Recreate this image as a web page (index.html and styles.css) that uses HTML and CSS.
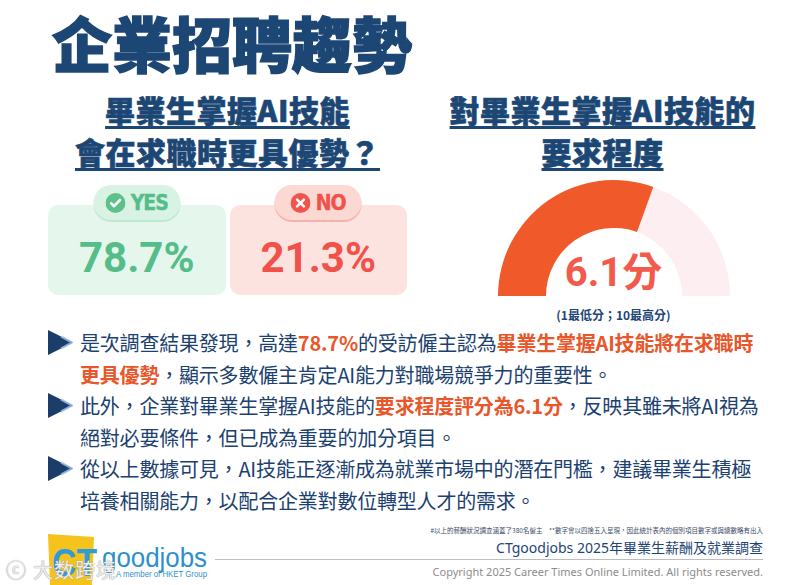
FILE: index.html
```html
<!DOCTYPE html>
<html lang="zh-Hant">
<head>
<meta charset="utf-8">
<title>企業招聘趨勢</title>
<link rel="stylesheet" href="styles.css">
</head>
<body>
<div class="page">
  <h1 class="title">企業招聘趨勢</h1>

  <section class="top">
    <div class="col">
      <h2 class="sub">畢業生掌握AI技能<br>會在求職時更具優勢？</h2>
      <div class="choices">
        <div class="choice yes">
          <div class="pill">
            <svg class="pill-icon" viewBox="0 0 20 20" width="20" height="20"><circle cx="10" cy="10" r="10" fill="#5cc18b"/><path d="M5.6 10.3 L8.6 13.2 L14.4 7" fill="none" stroke="#fff" stroke-width="2.6" stroke-linecap="round" stroke-linejoin="round"/></svg>
            <span class="pill-text">YES</span>
          </div>
          <div class="num">78.7%</div>
        </div>
        <div class="choice no">
          <div class="pill">
            <svg class="pill-icon" viewBox="0 0 20 20" width="20" height="20"><circle cx="10" cy="10" r="10" fill="#f0544a"/><path d="M6.6 6.6 L13.4 13.4 M13.4 6.6 L6.6 13.4" fill="none" stroke="#fff" stroke-width="2.6" stroke-linecap="round"/></svg>
            <span class="pill-text">NO</span>
          </div>
          <div class="num">21.3%</div>
        </div>
      </div>
    </div>

    <div class="col">
      <h2 class="sub">對畢業生掌握AI技能的<br>要求程度</h2>
      <div class="gauge">
        <svg viewBox="0 0 240 120" width="240" height="120">
          <path d="M159.3 8.9 A116 116 0 0 1 236 118 L188 118 A68 68 0 0 0 143 54 Z" fill="#fdeef1"/>
          <path d="M4 118 A116 116 0 0 1 159.3 8.9 L143 54 A68 68 0 0 0 52 118 Z" fill="#f05a2a"/>
        </svg>
        <div class="score">6.1分</div>
      </div>
      <div class="legend">(1最低分；10最高分)</div>
    </div>
  </section>

  <ul class="points">
    <li>
      <svg class="tri" viewBox="0 0 25 25" width="25" height="25"><polygon points="0,0 25,12.5 0,25" fill="#1b3d69"/><polyline points="13,6.5 24,12.5 13,18.5" fill="none" stroke="#9cc0e4" stroke-width="2" stroke-linejoin="round" opacity="0.8"/></svg>
      <p>是次調查結果發現，高達<b>78.7%</b>的受訪僱主認為<b>畢業生掌握AI技能將在求職時<br>更具優勢</b>，顯示多數僱主肯定AI能力對職場競爭力的重要性。</p>
    </li>
    <li>
      <svg class="tri" viewBox="0 0 25 25" width="25" height="25"><polygon points="0,0 25,12.5 0,25" fill="#1b3d69"/><polyline points="13,6.5 24,12.5 13,18.5" fill="none" stroke="#9cc0e4" stroke-width="2" stroke-linejoin="round" opacity="0.8"/></svg>
      <p>此外，企業對畢業生掌握AI技能的<b>要求程度評分為6.1分</b>，反映其雖未將AI視為<br>絕對必要條件，但已成為重要的加分項目。</p>
    </li>
    <li>
      <svg class="tri" viewBox="0 0 25 25" width="25" height="25"><polygon points="0,0 25,12.5 0,25" fill="#1b3d69"/><polyline points="13,6.5 24,12.5 13,18.5" fill="none" stroke="#9cc0e4" stroke-width="2" stroke-linejoin="round" opacity="0.8"/></svg>
      <p>從以上數據可見，AI技能正逐漸成為就業市場中的潛在門檻，建議畢業生積極<br>培養相關能力，以配合企業對數位轉型人才的需求。</p>
    </li>
  </ul>

  <footer class="foot">
    <svg class="logo" viewBox="0 0 170 55" width="170" height="55">
      <polygon points="8,4 54,7 52,55 10,55" fill="#f6c31c"/>
      <text x="12" y="46" class="logo-ct" textLength="45" lengthAdjust="spacingAndGlyphs">CT</text>
      <text x="62" y="37" class="logo-gj" textLength="105" lengthAdjust="spacingAndGlyphs">goodjobs</text>
      <text x="76" y="47" class="logo-sub" textLength="91" lengthAdjust="spacingAndGlyphs">A member of HKET Group</text>
    </svg>
    <div class="foot-text">
      <div class="note">#以上的薪酬狀況調查涵蓋了380名僱主　**數字會以四捨五入呈現，因此統計表內的個別項目數字或與總數略有出入</div>
      <div class="survey">CTgoodjobs 2025年畢業生薪酬及就業調查</div>
      <div class="rule"></div>
      <div class="copy">Copyright 2025 Career Times Online Limited. All rights reserved.</div>
    </div>
  </footer>

  <div class="watermark"><span class="wm-icon">ⓒ</span>大数跨境</div>
</div>
</body>
</html>
```
FILE: styles.css
```css
* { box-sizing: border-box; }
html, body { margin: 0; padding: 0; background: #ffffff; }
body {
  font-family: "Noto Sans CJK TC", "Noto Sans", sans-serif;
  color: #1b416f;
}
.page {
  position: relative;
  width: 798px;
  height: 585px;
  overflow: hidden;
  background: #ffffff;
}
.title {
  margin: 0;
  padding: 9px 0 0 52px;
  font-size: 60px;
  line-height: 66px;
  font-weight: 900;
  color: #1c4775;
  -webkit-text-stroke: 1.5px #1c4775;
}
.top {
  display: grid;
  grid-template-columns: 359px 1fr;
  margin: 13px 0 0 48px;
}
.col {
  display: flex;
  flex-direction: column;
  align-items: center;
}
.sub {
  margin: 0;
  font-size: 30px;
  line-height: 42px;
  font-weight: 900;
  text-align: center;
  color: #1c4775;
  -webkit-text-stroke: 0.6px #1c4775;
  text-decoration: underline;
  text-decoration-thickness: 3px;
  text-underline-offset: 4px;
  letter-spacing: 0.5px;
}
.choices {
  display: flex;
  gap: 4px;
  width: 359px;
  margin-top: 13px;
}
.choice {
  position: relative;
  flex: 1;
  margin-top: 20px;
  height: 90px;
  border-radius: 10px;
  text-align: center;
}
.choice.yes { background: #e5f7ec; color: #55bd89; }
.choice.no { background: #fde3df; color: #f0524a; }
.pill {
  position: absolute;
  top: -20px;
  left: 50%;
  transform: translateX(-50%);
  width: 87px;
  height: 35px;
  border-radius: 18px;
  display: flex;
  align-items: center;
  justify-content: center;
  gap: 5px;
}
.yes .pill { background: #d8f3e3; box-shadow: 0 2px 0 #c0e8d1; }
.no .pill { background: #fcd8d3; box-shadow: 0 2px 0 #f3b4ab; }
.pill-icon { flex: none; }
.pill-text {
  font-family: "DejaVu Sans Condensed", "DejaVu Sans", sans-serif;
  font-weight: 700;
  font-size: 21px;
  line-height: 22px;
  letter-spacing: -1px;
  -webkit-text-stroke: 0.4px currentColor;
}
.num {
  padding-top: 30px;
  font-family: Roboto, "Liberation Sans", sans-serif;
  font-weight: 700;
  font-size: 42px;
  line-height: 45px;
}
.gauge {
  position: relative;
  width: 240px;
  height: 120px;
  margin: 6px 0 0 22px;
}
.gauge svg { display: block; }
.score {
  position: absolute;
  left: 0;
  right: 0;
  top: 75px;
  text-align: center;
  font-family: Roboto, "Noto Sans CJK TC", sans-serif;
  font-weight: 700;
  font-size: 40px;
  line-height: 40px;
  color: #f25a4b;
}
.legend {
  margin: 9px 0 0 22px;
  font-size: 12px;
  line-height: 16px;
  font-weight: 700;
  color: #1c4474;
}
.points {
  list-style: none;
  margin: 4px 0 0 0;
  padding: 0 0 0 48px;
}
.points li {
  display: flex;
  align-items: flex-start;
  gap: 7px;
}
.tri {
  flex: none;
  margin-top: 3px;
}
.points p {
  margin: 0;
  font-size: 20px;
  line-height: 31.5px;
  letter-spacing: -0.2px;
  white-space: nowrap;
  color: #1b416f;
}
.points b {
  font-weight: 700;
  color: #e8562a;
}
.foot {
  display: grid;
  grid-template-columns: 170px 1fr;
  column-gap: 5px;
  margin-top: 9px;
  padding: 0 35px 0 40px;
}
.logo {
  display: block;
  margin-top: 5px;
}
.logo-ct {
  font-family: "Liberation Sans", Arial, sans-serif;
  font-weight: 700;
  font-size: 38px;
  fill: #2f9bd9;
}
.logo-gj {
  font-family: "Liberation Sans", Arial, sans-serif;
  font-weight: 400;
  font-size: 27px;
  fill: #2e8fd0;
}
.logo-sub {
  font-family: "Liberation Sans", Arial, sans-serif;
  font-size: 8.5px;
  fill: #2e8fd0;
}
.foot-text {
  display: flex;
  flex-direction: column;
  align-items: flex-end;
}
.note {
  font-size: 6.5px;
  line-height: 10px;
  color: #3a4a66;
  white-space: nowrap;
}
.survey {
  margin-top: 4px;
  font-family: "Noto Sans", "Noto Sans CJK TC", sans-serif;
  font-size: 14px;
  line-height: 18px;
  color: #1c4474;
  white-space: nowrap;
}
.rule {
  align-self: stretch;
  margin-top: 2px;
  border-top: 1px solid #bdbdbd;
}
.copy {
  margin-top: 4px;
  font-family: "Noto Sans", sans-serif;
  font-size: 11px;
  line-height: 16px;
  color: #8c8c8c;
  white-space: nowrap;
}
.watermark {
  position: absolute;
  left: 6px;
  top: 558px;
  font-size: 20px;
  line-height: 24px;
  color: rgba(255, 255, 255, 0.85);
  text-shadow: 0 0 1px #9a9a9a, 0 0 1px #9a9a9a;
  letter-spacing: 1px;
}
.wm-icon {
  margin-right: 6px;
}
```
